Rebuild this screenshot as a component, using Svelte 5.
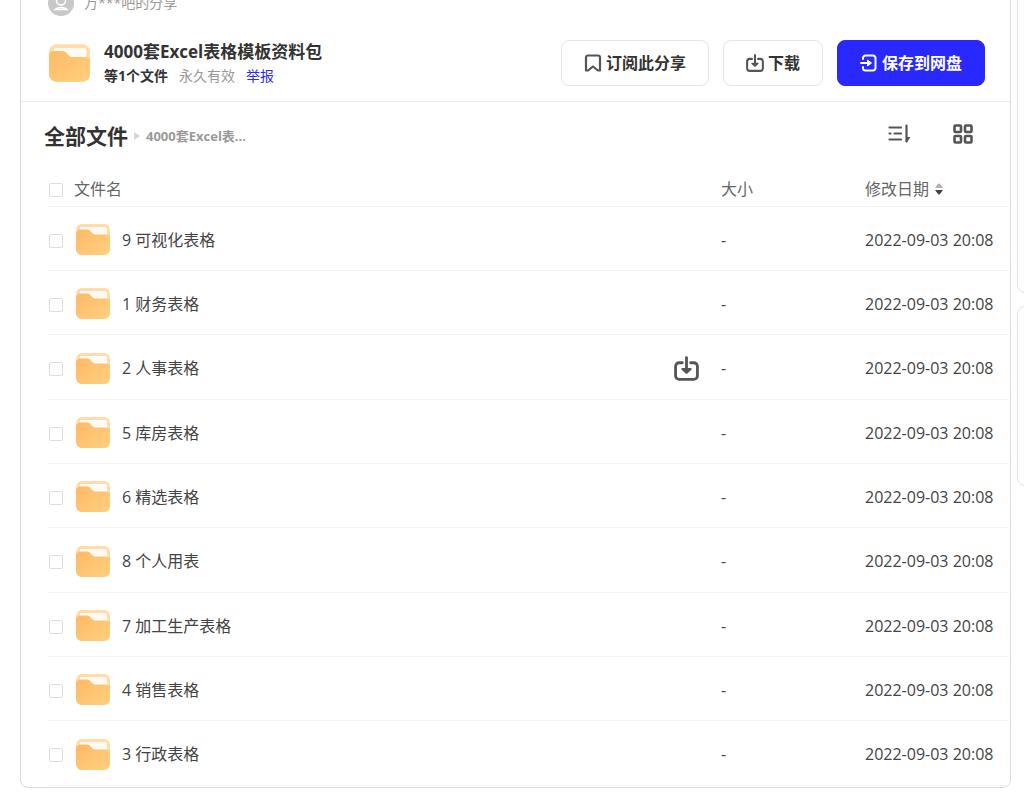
<script>
  const files = [
    "9 可视化表格",
    "1 财务表格",
    "2 人事表格",
    "5 库房表格",
    "6 精选表格",
    "8 个人用表",
    "7 加工生产表格",
    "4 销售表格",
    "3 行政表格",
  ].map((name) => ({ name, size: "-", date: "2022-09-03 20:08" }));

  // Row whose download action is visible
  let hovered = $state(2);
  let selected = $state(files.map(() => false));

  function toggleAll(e) {
    selected = files.map(() => e.target.checked);
  }
</script>

{#snippet folderIcon()}
  <svg class="folder" viewBox="0 0 34 31" aria-hidden="true">
    <defs>
      <linearGradient id="folder-front" x1="0" y1="0" x2="1" y2="1">
        <stop offset="0" stop-color="#ffba65" />
        <stop offset="1" stop-color="#ffcf80" />
      </linearGradient>
    </defs>
    <rect width="34" height="31" rx="6" fill="#ffdcaa" />
    <path d="M4 3h25a2 2 0 0 1 2 2v8H4z" fill="#fffaf2" />
    <path
      d="M0 10C0 7 2 5.500 5 5.500h5.500c2 0 3 .6 4.200 2l1.500 1.500c.9 1 1.900 1.500 3.300 1.500H30c2.500 0 4 1 4 3V25a6 6 0 0 1-6 6H6a6 6 0 0 1-6-6z"
      fill="url(#folder-front)"
    />
  </svg>
{/snippet}

{#snippet downloadIcon()}
  <svg class="download" viewBox="0 0 24 24" aria-hidden="true">
    <path
      d="M8 6.500H5A3.500 3.500 0 0 0 1.500 10v9A3.500 3.500 0 0 0 5 22.500h14a3.500 3.500 0 0 0 3.500-3.500v-9A3.500 3.500 0 0 0 19 6.500h-3M12 1.500V14"
      fill="none"
      stroke="currentColor"
      stroke-width="2.700"
      stroke-linecap="round"
    />
    <path d="M8 11.500h8c1 0 1.300 1 .6 1.700l-3.700 3.500a1.300 1.300 0 0 1-1.800 0l-3.700-3.500c-.7-.7-.4-1.700.6-1.700z" fill="currentColor" />
  </svg>
{/snippet}

<div class="page">
  <main class="share">
    <div class="owner">
      <svg class="avatar" viewBox="0 0 26 26" aria-hidden="true">
        <circle cx="13" cy="13" r="13" fill="#c8c8c8" />
        <g fill="none" stroke="#fff" stroke-width="1.500" stroke-linecap="round">
          <circle cx="13" cy="10.500" r="4.500" />
          <path d="M7 19.500c1.500-1.400 3.500-2 6-2s4.500.6 6 2z" />
        </g>
      </svg>
      <span>万***吧的分享</span>
    </div>

    <header class="header">
      <div class="cover">{@render folderIcon()}</div>
      <div class="info">
        <h1>4000套Excel表格模板资料包</h1>
        <p>
          <strong>等1个文件</strong>
          <span>永久有效</span>
          <a href="#report">举报</a>
        </p>
      </div>
      <div class="actions">
        <button class="btn">
          <svg viewBox="0 0 18 18" aria-hidden="true">
            <path
              d="M4 1.500h10a2 2 0 0 1 2 2V16.500l-2 0-5-4-5 4-2 0V3.500a2 2 0 0 1 2-2z"
              fill="none"
              stroke="#555"
              stroke-width="2.200"
              stroke-linejoin="round"
            />
          </svg>
          订阅此分享
        </button>
        <button class="btn">
          {@render downloadIcon()}
          下载
        </button>
        <button class="btn primary">
          <svg viewBox="0 0 18 18" aria-hidden="true">
            <path
              d="M3 5V4A2.500 2.500 0 0 1 5.500 1.500h7.500A2.500 2.500 0 0 1 15.500 4v10a2.500 2.500 0 0 1-2.500 2.500H5.500A2.500 2.500 0 0 1 3 14v-1M1 9h8"
              fill="none"
              stroke="#fff"
              stroke-width="2"
              stroke-linecap="round"
            />
            <path d="M7.500 6l4 3-4 3z" fill="#fff" stroke="#fff" stroke-linejoin="round" />
          </svg>
          保存到网盘
        </button>
      </div>
    </header>

    <div class="toolbar">
      <nav class="crumbs">
        <a class="root" href="#all">全部文件</a>
        <svg class="arrow" viewBox="0 0 6 8" aria-hidden="true"><path d="M0 0l6 4-6 4z" fill="#d6d6d6" /></svg>
        <span>4000套Excel表...</span>
      </nav>
      <div class="views">
        <button aria-label="排序">
          <svg viewBox="0 0 22 22" aria-hidden="true">
            <path
              d="M1.500 4.500h11.500M1.500 10.500h1M6.500 10.500h6.500M1.500 16.500h11.500M18.500 2.500v16"
              fill="none"
              stroke="#555"
              stroke-width="2.200"
              stroke-linecap="round"
            />
            <path d="M18 14h3.400c.6 0 .8.600.5 1L18.800 19.500z" fill="#555" />
          </svg>
        </button>
        <button aria-label="网格视图">
          <svg viewBox="0 0 22 22" aria-hidden="true">
            <g fill="none" stroke="#555" stroke-width="2.600">
              <rect x="2.500" y="2.500" width="6.500" height="6.500" rx="1" />
              <rect x="13" y="2.500" width="6.500" height="6.500" rx="1" />
              <rect x="2.500" y="13" width="6.500" height="6.500" rx="1" />
              <rect x="13" y="13" width="6.500" height="6.500" rx="1" />
            </g>
          </svg>
        </button>
      </div>
    </div>

    <table>
      <colgroup>
        <col class="col-check" />
        <col />
        <col class="col-meta" />
        <col class="col-meta" />
      </colgroup>
      <thead>
        <tr>
          <th><input type="checkbox" aria-label="全选" checked={selected.every(Boolean)} onchange={toggleAll} /></th>
          <th>文件名</th>
          <th>大小</th>
          <th>
            <button class="sort">
              修改日期
              <svg viewBox="0 0 8 12" aria-hidden="true">
                <path d="M0 5L3 1a1.400 1.400 0 0 1 2 0L8 5z" fill="#b0b0b0" />
                <path d="M0 7h8L5 11a1.400 1.400 0 0 1-2 0z" fill="#444" />
              </svg>
            </button>
          </th>
        </tr>
      </thead>
      <tbody>
        {#each files as file, i}
          <tr onmouseenter={() => (hovered = i)}>
            <td><input type="checkbox" aria-label={file.name} bind:checked={selected[i]} /></td>
            <td>
              <div class="name">
                {@render folderIcon()}
                <span>{file.name}</span>
                {#if hovered === i}
                  <button class="row-action" aria-label="下载">{@render downloadIcon()}</button>
                {/if}
              </div>
            </td>
            <td>{file.size}</td>
            <td>{file.date}</td>
          </tr>
        {/each}
      </tbody>
    </table>
  </main>

  <aside>
    <section class="panel tall"></section>
    <section class="panel"></section>
  </aside>
</div>

<style>
  :global(body) {
    margin: 0;
    background: #fff;
  }

  .page {
    display: flex;
    gap: 6px;
    padding-left: 20px;
    overflow: hidden;
    color: #333;
    font-family: "Segoe UI", "Open Sans", "Noto Sans CJK SC", sans-serif;
    font-size: 16px;
    line-height: 24px;
  }

  button {
    padding: 0;
    border: 0;
    background: none;
    color: inherit;
    font: inherit;
    cursor: pointer;
  }

  a {
    text-decoration: none;
  }

  svg {
    display: block;
    flex: none;
  }

  /* scrolled a little past the top edge */
  .share {
    flex: 1;
    min-width: 0;
    box-sizing: border-box;
    margin-top: -24px;
    padding-bottom: 1px;
    border: 1px solid #dcdcdc;
    border-radius: 8px;
  }

  .owner {
    display: flex;
    align-items: center;
    gap: 10px;
    padding: 13px 27px 0;
    color: #999;
    font-size: 14px;
  }

  .avatar {
    width: 26px;
    height: 26px;
  }

  .header {
    display: flex;
    align-items: center;
    padding: 23px 25px 14px 28px;
    border-bottom: 1px solid #ededed;
  }

  .cover {
    margin-right: 14px;
  }

  .cover .folder {
    width: 41px;
    height: 38px;
  }

  .info {
    flex: 1;
  }

  h1 {
    margin: 0;
    font-size: 17px;
    line-height: 26px;
  }

  .info p {
    display: flex;
    gap: 11px;
    margin: 0;
    color: #999;
    font-size: 14px;
    line-height: 22px;
  }

  .info strong {
    color: #333;
  }

  .info a {
    color: #2b2bff;
  }

  .actions {
    display: flex;
    gap: 14px;
  }

  .btn {
    display: flex;
    align-items: center;
    gap: 4px;
    height: 46px;
    padding: 0 22px;
    border: 1px solid #e6e6e6;
    border-radius: 8px;
    font-weight: 700;
    white-space: nowrap;
  }

  .btn svg {
    width: 18px;
    height: 18px;
    color: #555;
  }

  .primary {
    border-color: #2828ff;
    background: #2828ff;
    color: #fff;
  }

  .toolbar {
    display: flex;
    align-items: center;
    justify-content: space-between;
    height: 67px;
    padding: 0 36px 0 23px;
  }

  .crumbs {
    display: flex;
    align-items: center;
    gap: 6px;
    color: #999;
    font-size: 13px;
    font-weight: 700;
  }

  .root {
    color: #333;
    font-size: 21px;
  }

  .arrow {
    width: 6px;
    height: 8px;
  }

  .views {
    display: flex;
    gap: 42px;
    padding-bottom: 4px;
  }

  .views svg {
    width: 22px;
    height: 22px;
  }

  table {
    width: calc(100% - 28px);
    margin-left: 27px;
    table-layout: fixed;
    border-collapse: separate;
    border-spacing: 0;
  }

  .col-check {
    width: 26px;
  }

  .col-meta {
    width: 144px;
  }

  th,
  td {
    box-sizing: border-box;
    height: 64px;
    padding: 2px 0 0;
    border-bottom: 1px solid #f3f3f3;
    color: #444;
    text-align: left;
    font-weight: 400;
  }

  th {
    height: 38px;
    color: #666;
  }

  tbody tr:nth-child(3n) td {
    height: 65px;
  }

  input {
    display: block;
    appearance: none;
    box-sizing: border-box;
    width: 14px;
    height: 14px;
    margin: 2px 0 0 1px;
    border: 1px solid #dcdcdc;
    border-radius: 2px;
    background: #fff;
  }

  input:checked {
    border-color: #2828ff;
    background: #2828ff;
  }

  .sort {
    display: flex;
    align-items: center;
    gap: 6px;
  }

  .sort svg {
    width: 8px;
    height: 12px;
  }

  .name {
    display: flex;
    align-items: center;
    gap: 12px;
    padding: 0 22px 0 2px;
  }

  .name .folder {
    width: 34px;
    height: 31px;
  }

  .row-action {
    margin-left: auto;
    color: #555;
  }

  .row-action .download {
    width: 25px;
    height: 25px;
  }

  aside {
    display: flex;
    flex-direction: column;
    gap: 13px;
    width: 7px;
    margin-top: -24px;
  }

  .panel {
    box-sizing: border-box;
    width: 320px;
    height: 180px;
    border: 1px solid #e2e2e2;
    border-radius: 8px;
  }

  .tall {
    height: 317px;
  }
</style>
